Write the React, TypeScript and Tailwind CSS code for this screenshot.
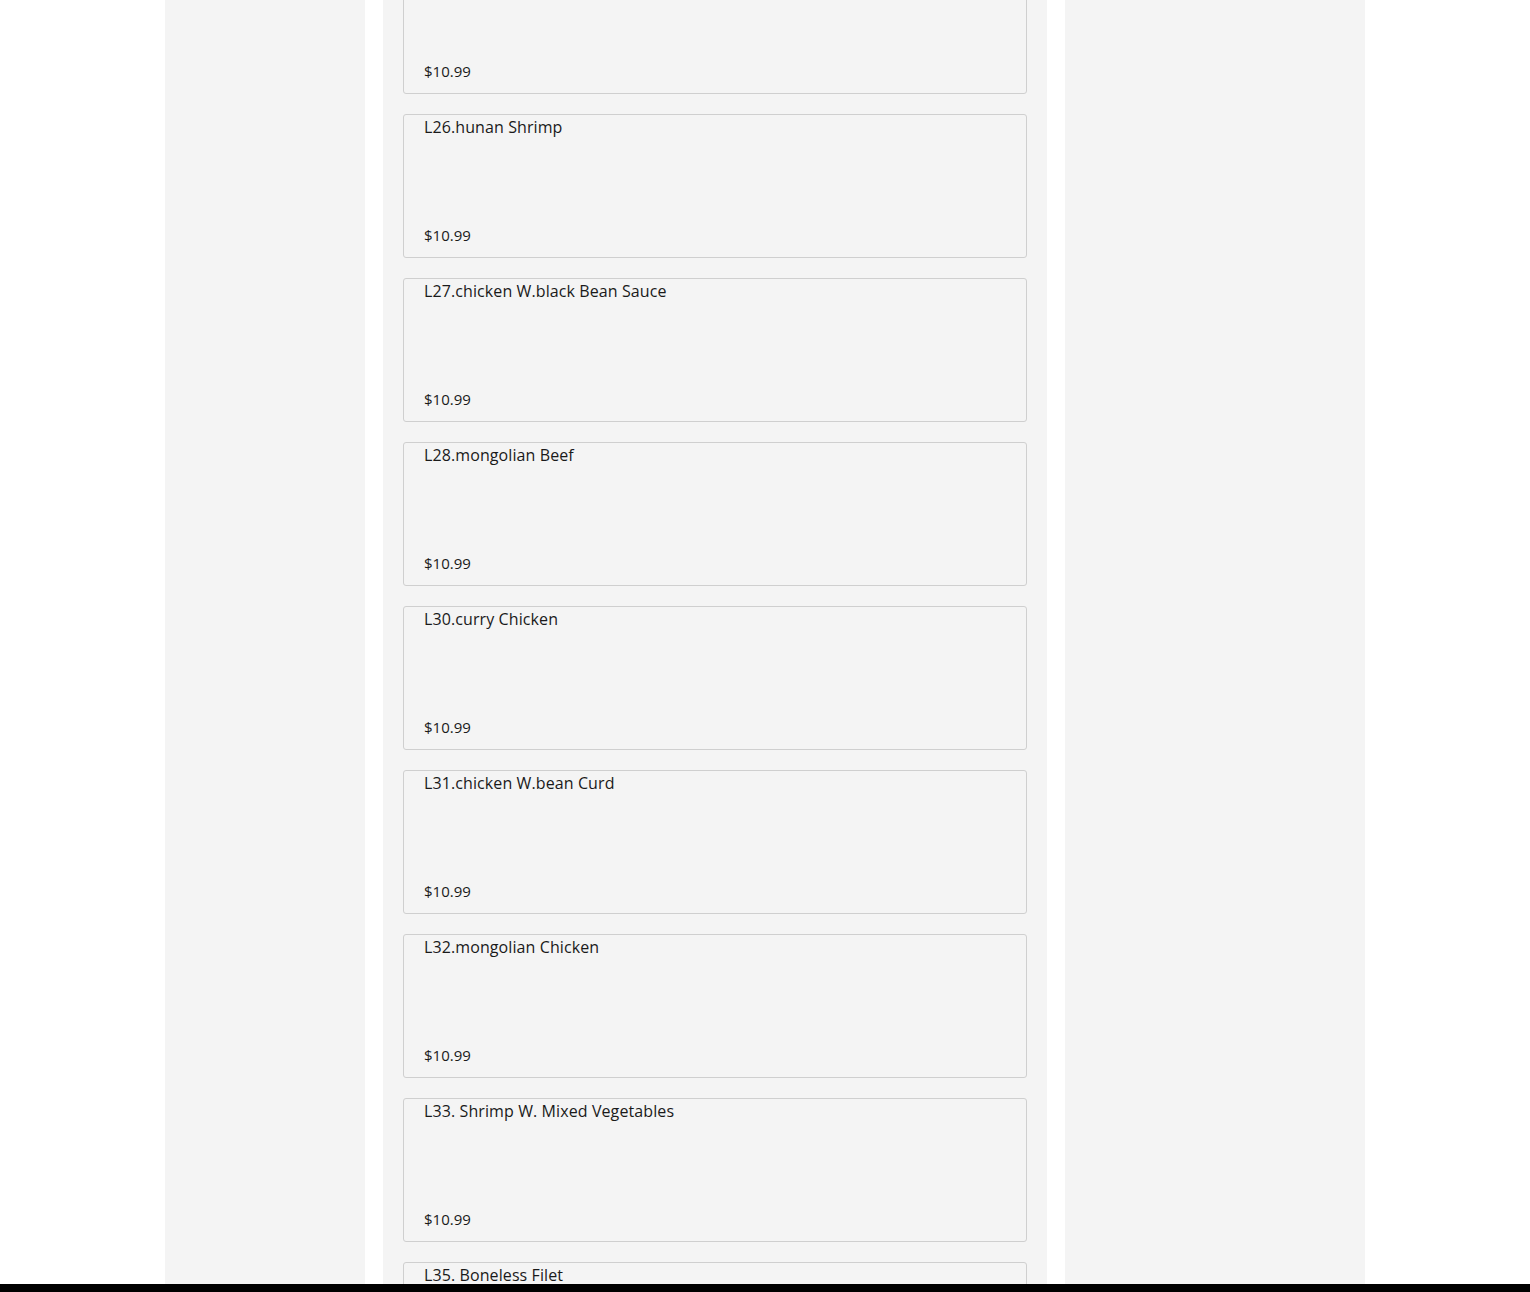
const items = [
  { name: 'L25.szechuan Shrimp', price: '$10.99' },
  { name: 'L26.hunan Shrimp', price: '$10.99' },
  { name: 'L27.chicken W.black Bean Sauce', price: '$10.99' },
  { name: 'L28.mongolian Beef', price: '$10.99' },
  { name: 'L30.curry Chicken', price: '$10.99' },
  { name: 'L31.chicken W.bean Curd', price: '$10.99' },
  { name: 'L32.mongolian Chicken', price: '$10.99' },
  { name: 'L33. Shrimp W. Mixed Vegetables', price: '$10.99' },
  { name: 'L35. Boneless Filet', price: '$10.99' },
];

const MenuCard = ({ name, price }: { name: string; price: string }) => (
  <div className="h-[144px] shrink-0 flex flex-col justify-between border border-[#cfcfcf] rounded-[3px] bg-[#f4f4f4] px-5 pt-px pb-[11px]">
    <div className="text-[16px] leading-[22px] tracking-[0.1px] text-[#1a1a1a]">{name}</div>
    <div className="text-[15px] leading-[22px] text-[#1a1a1a] font-medium">{price}</div>
  </div>
);

const App = () => {
  return (
    <div
      className="h-screen flex flex-col bg-white overflow-hidden"
      style={{ fontFamily: '"Open Sans", "Liberation Sans", sans-serif' }}
    >
      <main className="flex-1 min-h-0 overflow-hidden">
        <div className="max-w-[1200px] mx-auto h-full flex gap-[18px]">
          <aside className="w-[200px] shrink-0 bg-[#f4f4f4]" />
          <section className="w-[664px] shrink-0 bg-[#f4f4f4] px-5 overflow-hidden">
            <div className="flex flex-col gap-5 -mt-[50px]">
              {items.map((item) => (
                <MenuCard key={item.name} {...item} />
              ))}
            </div>
          </section>
          <aside className="w-[300px] shrink-0 bg-[#f4f4f4]" />
        </div>
      </main>
      <footer className="h-2 bg-black" />
    </div>
  );
};

export default App;
